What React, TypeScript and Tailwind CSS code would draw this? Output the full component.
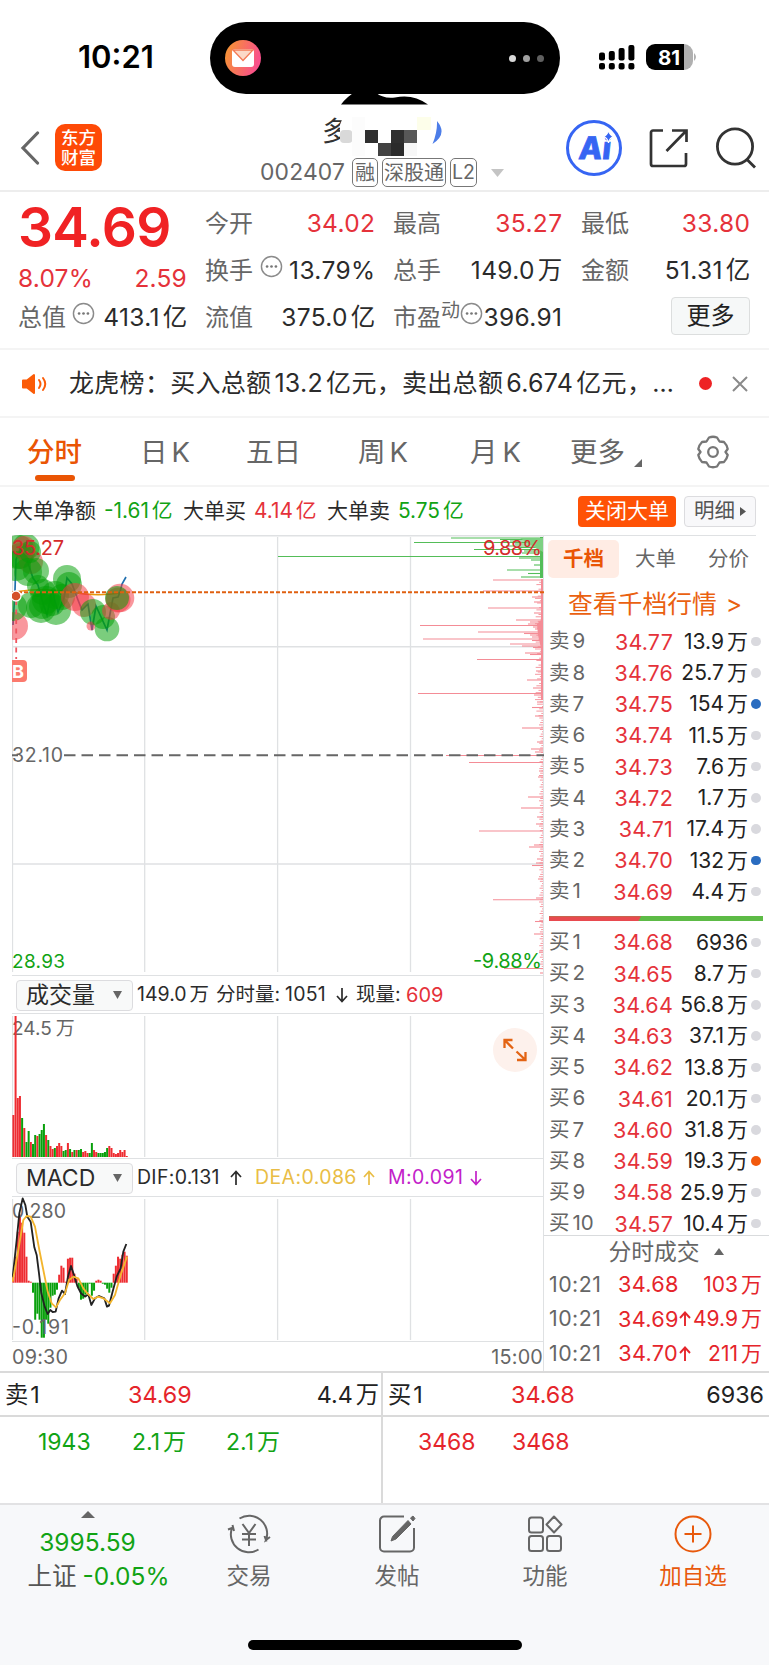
import React from "react";

type Side = "r" | "g";

interface Level {
  label: string;
  no: string;
  price: string;
  vol: string;
  dot?: string;
}

const SELLS: Level[] = [
  { label: "卖", no: "9", price: "34.77", vol: "13.9万" },
  { label: "卖", no: "8", price: "34.76", vol: "25.7万" },
  { label: "卖", no: "7", price: "34.75", vol: "154万", dot: "bg-[#2a6cc0]" },
  { label: "卖", no: "6", price: "34.74", vol: "11.5万" },
  { label: "卖", no: "5", price: "34.73", vol: "7.6万" },
  { label: "卖", no: "4", price: "34.72", vol: "1.7万" },
  { label: "卖", no: "3", price: "34.71", vol: "17.4万" },
  { label: "卖", no: "2", price: "34.70", vol: "132万", dot: "bg-[#2a6cc0]" },
  { label: "卖", no: "1", price: "34.69", vol: "4.4万" },
];

const BUYS: Level[] = [
  { label: "买", no: "1", price: "34.68", vol: "6936" },
  { label: "买", no: "2", price: "34.65", vol: "8.7万" },
  { label: "买", no: "3", price: "34.64", vol: "56.8万" },
  { label: "买", no: "4", price: "34.63", vol: "37.1万" },
  { label: "买", no: "5", price: "34.62", vol: "13.8万" },
  { label: "买", no: "6", price: "34.61", vol: "20.1万" },
  { label: "买", no: "7", price: "34.60", vol: "31.8万" },
  { label: "买", no: "8", price: "34.59", vol: "19.3万", dot: "bg-[#f2590c]" },
  { label: "买", no: "9", price: "34.58", vol: "25.9万" },
  { label: "买", no: "10", price: "34.57", vol: "10.4万" },
];

// [y, left edge] of the long order lines, in page units
const DEPTH_GREEN = [
  [538, 451], [539.5, 500], [541, 510], [542.5, 414], [544, 515], [546, 506], [547.5, 518], [549.5, 474],
  [551, 524], [553, 522], [556.5, 278], [558, 519], [560, 531], [565, 534], [570, 507], [573.5, 528], [577, 521],
];
const DEPTH_RED = [
  [580, 493], [591, 483], [597, 532], [602, 534], [608, 488], [613, 534], [620, 516], [622, 530], [624, 528],
  [625.5, 420], [627, 533], [629, 535], [632, 478], [633.5, 524], [635, 530], [637, 532], [639, 423], [640.5, 532],
  [644, 510], [646, 522], [647.5, 533], [653, 525], [654.5, 530], [659.5, 477], [671, 536], [680, 527], [688, 533],
  [693.5, 418], [695, 534], [702, 537], [707.5, 532], [716, 535], [728, 522], [742, 537], [749, 531], [752, 535],
  [755.5, 446], [762.5, 469], [771, 539], [777, 538], [797, 528], [808, 521], [817, 537], [824, 536], [831, 479],
  [845, 534], [847, 529], [859, 537], [863, 536], [865.5, 532], [879, 538], [898, 536], [899.7, 493],
  [921.5, 535], [934, 534], [951, 539], [968.5, 504], [973, 540],
];

// [cx, cy, r, side]
const BUBBLES: [number, number, number, Side][] = [
  [26, 547, 13.5, "g"], [18, 552, 17, "g"], [20, 556, 13, "g"], [24, 548, 12, "r"], [31, 562, 12, "r"], [16, 566, 15, "g"],
  [28, 572, 14, "g"], [36, 571, 13, "g"], [30, 552, 11, "g"], [67, 579, 14, "g"], [69, 585, 13, "g"],
  [55, 595, 14, "g"], [43, 592, 13, "g"], [31, 605, 13, "g"], [41, 608, 15, "g"], [56, 610, 15, "g"],
  [46, 600, 14, "g"], [62, 597, 13, "g"], [52, 603, 13, "g"], [42, 606, 13, "g"], [38, 586, 11, "g"],
  [75, 597, 14, "r"], [84, 605, 12, "r"],
  [93, 612, 13, "g"], [91, 626, 4.5, "r"], [103, 617, 12, "g"], [107, 629, 12.3, "g"], [111, 611, 9, "r"],
  [120, 598, 14.3, "r"], [118, 600, 12.5, "r"], [117, 598, 12, "g"], [14, 626, 14, "r"], [13, 607, 14, "g"],
];

const VOLUME: [number, Side][] = [
  [42, "r"], [141, "r"], [59, "r"], [61, "r"], [39, "g"], [29, "r"], [15, "g"], [26, "g"], [15, "r"], [13, "g"],
  [22, "g"], [21, "r"], [23, "g"], [27, "g"], [33, "g"], [22, "r"], [17, "g"], [11, "r"], [8, "r"], [9, "g"],
  [11, "r"], [14, "r"], [11, "r"], [6, "g"], [7, "g"], [14, "r"], [8, "g"], [5, "r"], [7, "g"], [7, "r"],
  [7, "g"], [8, "g"], [5, "r"], [6, "r"], [4, "r"], [4, "g"], [14, "g"], [7, "r"], [5, "r"], [4, "g"],
  [4, "g"], [4, "g"], [5, "g"], [9, "g"], [11, "r"], [9, "r"], [4, "r"], [3, "r"], [4, "r"], [7, "r"],
  [5, "r"], [7, "r"], [1, "r"],
];

const MACD = [
  6, 26, 51, 68, 60, 50, 26, 2, 1, -10, -37, -31, -37, -55, -55, -37, -41, -25, -13, -12, -7, 8, 17, 15, 1, 24, 25, 25,
  9, 4, -6, -17, -16, -12, -10, -1, -13, -8, 2, 3, 2, -1, -2, -6, -10, -5, 9, 17, 26, 24, 28, 31, 27,
];

const ask = "#ee2c31";
const up = "#09a00c";
const fillOf = (s: Side) => (s === "r" ? ask : up);

// number with its CJK unit set slightly apart
function Num({ v }: { v: string }) {
  const m = v.match(/^(.*?)([万亿])$/);
  if (!m) return <>{v}</>;
  return (
    <>
      {m[1]}
      <span className="ml-[3px] tracking-normal">{m[2]}</span>
    </>
  );
}

function Info({ className = "" }: { className?: string }) {
  return (
    <svg viewBox="0 0 24 24" className={`w-[23px] h-[23px] shrink-0 ${className}`} fill="none" stroke="#8b8b8b" strokeWidth="1.5">
      <circle cx="12" cy="12" r="10.5" />
      <g fill="#777" stroke="none">
        <circle cx="7.4" cy="12" r="1.4" />
        <circle cx="12" cy="12" r="1.4" />
        <circle cx="16.6" cy="12" r="1.4" />
      </g>
    </svg>
  );
}

function StatusBar() {
  return (
    <div className="relative h-[104px] flex">
      <div className="w-[210px] pl-[78px] pt-[41px] text-[31px] leading-[32px] font-semibold tracking-[0px] text-black">10:21</div>
      <div className="w-[350px] h-[72px] mt-[22px] rounded-full bg-black flex items-center justify-between pl-[15px] pr-[16px]">
        <svg viewBox="0 0 36 36" className="w-9 h-9">
          <defs>
            <linearGradient id="mail" x1="0" y1="0" x2="1" y2="0.3">
              <stop offset="0" stopColor="#f59a2c" />
              <stop offset="1" stopColor="#f9508a" />
            </linearGradient>
          </defs>
          <circle cx="18" cy="18" r="18" fill="url(#mail)" />
          <rect x="7" y="9" width="22" height="18" rx="3" fill="#fff" />
          <path d="M8 10 L18 20.5 L28 10Z" fill="#fbd9c8" stroke="#f47a55" strokeWidth="1.3" />
        </svg>
        <div className="flex gap-[7px]">
          <i className="w-[7px] h-[7px] rounded-full bg-[#d8d8d8]" />
          <i className="w-[7px] h-[7px] rounded-full bg-[#a0a0a0]" />
          <i className="w-[7px] h-[7px] rounded-full bg-[#606060]" />
        </div>
      </div>
      <svg viewBox="600 44 98 27" className="w-[98px] h-[27px] ml-[39px] mt-[44px]">
        {[52.5, 51, 48, 45].map((y, i) => (
          <g key={y}>
            <rect x={600 + i * 9.8} y={y} width="6" height={60.5 - y} rx="2" />
            <rect x={600 + i * 9.8} y="63" width="6" height="6.5" rx="2" />
          </g>
        ))}
        <path d="M684 44h1a9 9 0 0 1 9 9v8a9 9 0 0 1-9 9h-1z" fill="#b0b0b0" />
        <path d="M685 44v26h-29a9 9 0 0 1-9-9v-8a9 9 0 0 1 9-9z" />
        <path d="M695 53q4 4 0 8z" fill="#b0b0b0" />
        <text x="670" y="64.5" textAnchor="middle" fontSize="20.5" fontWeight="700" fill="#fff">81</text>
      </svg>
      <svg viewBox="340 92 90 13" className="absolute left-[340px] top-[92px] w-[90px] h-[13px]">
        <path d="M341 104.5q6-8 14-12.5h20q8 7 20 5.5q18-4 33 7z" />
      </svg>
    </div>
  );
}

function TitleBar() {
  return (
    <div className="h-[88px] flex border-b-2 border-[#ededed] text-[#666]">
      <svg viewBox="0 0 20 34" className="w-5 h-[34px] ml-[20px] mt-[27px]" fill="none" stroke="#666" strokeWidth="3.2" strokeLinecap="round">
        <path d="M17.500 2 L3 17 L17.500 32" />
      </svg>
      <div className="w-[47px] h-[47px] ml-[15px] mt-[20px] rounded-[10px] bg-[#fe4a07] text-white font-medium text-[17.500px] leading-[19.500px] flex flex-col items-center justify-center">
        <span>东方</span>
        <span>财富</span>
      </div>
      <div className="w-[306px] ml-[158px]">
        <div className="flex h-[53px] pt-[13px] pl-[62px]">
          <span className="w-[18px] h-[28px] whitespace-nowrap text-[27px] leading-[28px] mt-[1px] text-[#333]">多</span>
          <svg viewBox="340 117 106 40" className="relative w-[106px] h-[40px]">
            <path d="M343 117H431V156H340V143L338 130Z" fill="#fff" />
            <rect x="340" y="130" width="12.500" height="13" rx="4" fill="#d9d9d9" />
            <rect x="352" y="117" width="13" height="39" fill="#fcfcfc" />
            <rect x="365" y="130" width="13" height="13" fill="#2f2f2f" />
            <rect x="391" y="130" width="13" height="13" fill="#2f2f2f" />
            <rect x="404" y="130" width="13" height="13" fill="#585858" />
            <rect x="378" y="143" width="13" height="13" fill="#424242" />
            <rect x="391" y="143" width="13" height="13" fill="#2b2b2b" />
            <rect x="404" y="143" width="13" height="13" fill="#f7f7f7" />
            <rect x="417" y="117" width="14" height="13" fill="#fdfeea" />
            <path d="M437 121q11 13-4.500 23q5-12 4.500-23z" fill="#4c7de8" />
          </svg>
        </div>
        <div className="flex items-center h-[31px] whitespace-nowrap">
          <span className="text-[22.800px] w-[92px] tracking-[0.200px]">002407</span>
          <span className="w-[26px] h-[29px] border-[1.500px] border-[#777] rounded-[5px] text-[20px] flex items-center justify-center">融</span>
          <span className="w-[64px] h-[29px] ml-[4px] border-[1.500px] border-[#777] rounded-[5px] text-[20px] flex items-center justify-center">深股通</span>
          <span className="w-[27px] h-[29px] ml-[4px] border-[1.500px] border-[#777] rounded-[5px] text-[19.500px] flex items-center justify-center">L2</span>
          <svg viewBox="0 0 13 8" className="w-[13px] h-2 ml-[14px]"><path d="M0 0h13L6.500 8z" fill="#c4c4c4" /></svg>
        </div>
      </div>
      <svg viewBox="566 120 58 58" className="w-[58px] h-[58px] mt-[15px]" fill="none">
        <circle cx="594" cy="149" r="26.500" stroke="#3665f3" strokeWidth="3" />
        <g transform="translate(578 160) skewX(-6)">
          <text x="0" y="0" fontSize="31" fontWeight="800" fill="#3665f3" stroke="#3665f3" strokeWidth="0.800" textLength="32" lengthAdjust="spacingAndGlyphs">Ai</text>
        </g>
        <path d="M608.500 131q1 5.500 5.500 6.500q-4.500 1-5.500 6.500q-1-5.500-5.500-6.500q4.500-1 5.500-6.500z" fill="#3665f3" stroke="#fff" strokeWidth="1.200" />
      </svg>
      <svg viewBox="0 0 42 42" className="w-[42px] h-[42px] ml-[24px] mt-[23px]" fill="none" stroke="#333" strokeWidth="2.700">
        <path d="M15 3.500H5a2 2 0 0 0-2 2V37a2 2 0 0 0 2 2H36a2 2 0 0 0 2-2V26" />
        <path d="M24 3.500H38.500V15M38 4L18.500 24" />
      </svg>
      <svg viewBox="0 0 42 42" className="w-[42px] h-[42px] ml-[25px] mt-[23px]" fill="none" stroke="#333" strokeWidth="2.800">
        <circle cx="20" cy="19.500" r="17.600" />
        <path d="M31.500 32L40 40.500" />
      </svg>
    </div>
  );
}

function Cell({ label, value, red, children }: { label: string; value: string; red?: boolean; children?: React.ReactNode }) {
  return (
    <div className="flex items-center h-[47px] whitespace-nowrap text-[24px]">
      <span className="text-[#666]">{label}</span>
      {children}
      <span className={`ml-auto text-[24.500px] tracking-[0.350px] -mr-[0.350px] ${red ? "text-[#e5323a]" : "text-[#2b2b2b]"}`}><Num v={value} /></span>
    </div>
  );
}

function Quote() {
  return (
    <div className="h-[158px] pl-[18px] pr-[19px] pt-[8px] flex border-b-2 border-[#f4f4f4] leading-none">
      <div className="w-[169px]">
        <div className="h-[54px] flex items-center text-[55px] font-semibold tracking-[-0.700px] text-[#f02224]">34.69</div>
        <div className="h-[40px] flex items-center justify-between pt-[8px] text-[24.500px] tracking-[0.200px] text-[#e5323a]">
          <span>8.07%</span>
          <span>2.59</span>
        </div>
        <Cell label="总值" value="413.1亿"><Info className="ml-[6px] -mt-[9px]" /></Cell>
      </div>
      <div className="w-[170px] ml-[18px]">
        <Cell label="今开" value="34.02" red />
        <Cell label="换手" value="13.79%"><Info className="ml-[7px] -mt-[9px]" /></Cell>
        <Cell label="流值" value="375.0亿" />
      </div>
      <div className="w-[169px] ml-[18px]">
        <Cell label="最高" value="35.27" red />
        <Cell label="总手" value="149.0万" />
        <Cell label="市盈" value="396.91">
          <span className="text-[19px] text-[#666] -mt-[15px]">动</span>
          <Info className="-mt-[9px]" />
        </Cell>
      </div>
      <div className="w-[169px] ml-[19px]">
        <Cell label="最低" value="33.80" red />
        <Cell label="金额" value="51.31亿" />
        <div className="w-[79px] h-[38px] ml-auto mt-[3px] rounded-[4px] border-[1.500px] border-[#dcdede] bg-[#f6f8f8] text-[24px] text-[#222] flex items-center justify-center">更多</div>
      </div>
    </div>
  );
}

function News() {
  return (
    <div className="h-[68px] flex items-center border-b-2 border-[#f4f4f4] pl-[21px] pt-[1px] whitespace-nowrap text-[#2b2b2b]">
      <svg viewBox="0 0 28 22" className="w-7 h-[22px]" fill="none" stroke="#fb5c08" strokeWidth="2" strokeLinecap="round">
        <path d="M2 7.500h4l7-5.500v18L6 14.500H2z" fill="#fb5c08" strokeLinejoin="round" />
        <path d="M18 7q3 4 0 8" />
        <path d="M22 5q4.500 6 0 12" />
      </svg>
      <span className="ml-[20px] w-[608px] text-[25px] tracking-[0.300px]">
        龙虎榜：买入总额<span className="mx-[3px]">13.2</span>亿元，卖出总额<span className="mx-[3px]">6.674</span>亿元，…
      </span>
      <i className="w-[13px] h-[13px] rounded-full bg-[#ee2224] ml-[22px]" />
      <svg viewBox="0 0 16 16" className="w-4 h-4 ml-[20px]" stroke="#8a8a8a" strokeWidth="2"><path d="M1 1l14 14M15 1L1 15" /></svg>
    </div>
  );
}

function PeriodTabs() {
  return (
    <div className="h-[69px] flex border-b-2 border-[#f4f4f4] pl-[27px] text-[27.500px] leading-[69px] text-[#666] whitespace-nowrap">
      <div className="w-[113px] relative text-[#ea5504] font-medium">
        分时
        <i className="absolute left-[8px] bottom-[4px] w-[40px] h-[6px] rounded-full bg-[#ea5504]" />
      </div>
      <div className="w-[106px]">日<span className="ml-[4px]">K</span></div>
      <div className="w-[112px]">五日</div>
      <div className="w-[112px]">周<span className="ml-[4px]">K</span></div>
      <div className="w-[100px]">月<span className="ml-[5px]">K</span></div>
      <div className="w-[126px] flex">
        更多
        <svg viewBox="0 0 8 8" className="w-2 h-2 ml-[9px] mt-[41px]"><path d="M8 0v8H0z" fill="#666" /></svg>
      </div>
      <svg viewBox="-17 -17 34 34" className="w-[34px] h-[34px] mt-[17px]" fill="none" stroke="#777" strokeWidth="2.300" strokeLinejoin="round">
        <path d="M-4-14.500Q0-16 4-14.500L6.500-10.500L11-10Q14-7 14.700-3L12.500 0L14.700 3Q14 7 11 10L6.500 10.500L4 14.500Q0 16-4 14.500L-6.500 10.500L-11 10Q-14 7-14.700 3L-12.500 0L-14.700-3Q-14-7-11-10L-6.500-10.500Z" />
        <circle r="4.800" />
      </svg>
    </div>
  );
}

function BigOrders() {
  return (
    <div className="h-[48px] flex items-center pl-[12px] pr-[13px] text-[21px] text-[#2b2b2b] whitespace-nowrap">
      <span className="w-[92px]">大单净额</span>
      <span className="w-[79px] text-[#11a314] text-[20.800px]"><Num v="-1.61亿" /></span>
      <span className="w-[71px]">大单买</span>
      <span className="w-[73px] text-[#e5323a] text-[20.800px]"><Num v="4.14亿" /></span>
      <span className="w-[71px]">大单卖</span>
      <span className="text-[#11a314] text-[20.800px]"><Num v="5.75亿" /></span>
      <span className="ml-auto w-[98px] h-[31px] rounded-[4px] bg-[#ff5206] text-white flex items-center justify-center">关闭大单</span>
      <span className="ml-[8px] w-[72px] h-[31px] rounded-[4px] border-[1.500px] border-[#dcdcdf] bg-[#f8f8fa] text-[20.500px] text-[#555] flex items-center justify-center">
        明细
        <svg viewBox="0 0 6 9" className="w-[6px] h-[9px] ml-[5px]"><path d="M0 0l6 4.500L0 9z" fill="#555" /></svg>
      </span>
    </div>
  );
}

function Grid({ top, bottom }: { top: number; bottom: number }) {
  return (
    <g stroke="#dfe1e3" strokeWidth="1.300">
      <path d={`M12.500 ${top}V${bottom}M144.700 ${top}V${bottom}M277.600 ${top}V${bottom}M410.500 ${top}V${bottom}`} />
    </g>
  );
}

function PriceChart() {
  return (
    <svg viewBox="12 535 532 440" className="block w-[532px] h-[440px]">
      <Grid top={537} bottom={972} />
      <path d="M12 535.700H544M12 646.700H544M12 864H544" stroke="#dfe1e3" strokeWidth="1.400" />
      <g fontSize="19">
        <text x="12" y="762" fill="#666" fontSize="19.500" textLength="51">32.10</text>
        <text x="12" y="968" fill="#11a314" textLength="53">28.93</text>
      </g>
      <g stroke="#53bd58" strokeWidth="1.100">
        {DEPTH_GREEN.map(([y, x]) => <path key={y} d={`M${x} ${y}H543`} />)}
        <path d="M541.500 537V578" strokeWidth="3" />
        <path d="M520 538L543 538V552L534 547Z" fill="#7ed183" stroke="none" />
      </g>
      <g stroke="#f48c96" strokeWidth="1.100">
        {DEPTH_RED.map(([y, x]) => <path key={y} d={`M${x} ${y}H543`} />)}
        {Array.from({ length: 170 }, (_, i) => (
          <path key={i} strokeWidth="0.900" d={`M${542 - ((i * 37) % 11) * (i < 60 ? 0.7 : 0.3)} ${580 + i * 2.3}H543`} />
        ))}
        <path d="M542 579V700" strokeWidth="2" />
        <path d="M543 618L537 624L538 635L541 648H543Z" fill="#f48c96" stroke="none" />
      </g>
      <path d="M12 755.300H18M64 755.300H544" stroke="#666" strokeWidth="2" strokeDasharray="11.500 6" />
      <path d="M14 592q30-5 56 0t50 1" stroke="#e8960c" strokeWidth="1.500" fill="none" />
      <path d="M13 625L15 590L16 560L20 548L27 560L33 578L38 585L42 600L47 615L52 590L58 612L64 598L67 578L72 584L78 600L82 610L88 604L92 630L96 606L107 630L113 598L118 597L120 592L122 584L126 577" stroke="#1f6fae" strokeWidth="1.700" fill="none" />
      {BUBBLES.map(([x, y, r, s], i) => (
        <circle key={i} cx={x} cy={y} r={r} fill={s === "r" ? "#f33743" : "#02a006"} fillOpacity="0.52" />
      ))}
      <path d="M12 592.300H544" stroke="#e06010" strokeWidth="2" strokeDasharray="4 2" />
      <path d="M16.200 600V659" stroke="#f05560" strokeWidth="1.800" strokeDasharray="5 4.500" />
      <circle cx="16" cy="596" r="5" fill="#d4502a" stroke="#fff" strokeWidth="1.300" />
      <path d="M8 660H23a4 4 0 0 1 4 4V678a4 4 0 0 1-4 4H8z" fill="#fb7a6e" />
      <text x="12" y="677.500" fontSize="18" fontWeight="700" fill="#fff" textLength="12" lengthAdjust="spacingAndGlyphs">B</text>
      <g fontSize="20">
        <text x="12" y="555" fill="#d52b2b" textLength="52">35.27</text>
        <text x="542" y="555" textAnchor="end" fill="#d52b2b" textLength="59">9.88%</text>
        <text x="542" y="968" textAnchor="end" fill="#11a314" textLength="69">-9.88%</text>
      </g>
    </svg>
  );
}

function Picker({ name }: { name: string }) {
  return (
    <span className="w-[117px] h-[31px] mr-[4px] ml-[4px] rounded-[4px] border-[1.500px] border-[#dcdcdf] bg-[#f8f9f9] text-[23px] flex items-center justify-between pl-[9px] pr-[10px]">
      {name}
      <svg viewBox="0 0 9 8" className="w-[9px] h-2"><path d="M0 0h9L4.500 8z" fill="#666" /></svg>
    </span>
  );
}

function VolumeChart() {
  return (
    <svg viewBox="12 1014 532 144" className="block w-[532px] h-[144px]">
      <Grid top={1016} bottom={1157} />
      <text x="12" y="1035" fontSize="19" fill="#666">24.5<tspan dx="4">万</tspan></text>
      {VOLUME.map(([h, s], i) => (
        <rect key={i} x={12.4 + i * 2.18} y={1157 - h} width="2" height={h} fill={fillOf(s)} />
      ))}
      <circle cx="515" cy="1050" r="22" fill="#fdf1ec" />
      <path d="M504.500 1048V1040H512.500M505 1040.500L513 1048.500M525.500 1052V1060H517M525 1059.500L516.500 1051.500" fill="none" stroke="#e36414" strokeWidth="2.300" />
    </svg>
  );
}

function MacdChart() {
  return (
    <svg viewBox="12 1197 532 144" className="block w-[532px] h-[144px]">
      <Grid top={1199} bottom={1340} />
      {MACD.map((v, i) => (
        <rect key={i} x={12.4 + i * 2.18} y={v > 0 ? 1282.7 - v : 1282.7} width="2" height={Math.abs(v)} fill={v > 0 ? ask : up} />
      ))}
      <g fontSize="19.500" fill="#666">
        <text x="12" y="1218" textLength="54">0.280</text>
        <text x="12" y="1333.500" textLength="57">-0.191</text>
      </g>
      <g transform="translate(0 1160) scale(.3333)" fill="none" strokeLinejoin="round">
        <path d="M38 352L50 240L58 160L68 115L76 135L82 170L92 185L103 262L110 285L117 340L124 400L134 440L143 462L151 450L158 456L167 455L176 415L186 392L195 402L204 350L213 318L222 345L232 378L243 400L255 410L265 403L274 435L285 415L297 408L313 415L321 440L327 437L337 398L350 350L362 325L370 275L379 252" stroke="#222" strokeWidth="5.500" />
        <path d="M38 365L55 270L70 180L80 168L92 170L105 200L118 270L130 330L143 395L155 430L168 442L180 420L195 400L207 360L220 350L235 355L250 385L262 400L280 417L295 410L310 415L330 430L345 405L362 345L381 290" stroke="#f3b52d" strokeWidth="5.500" />
      </g>
    </svg>
  );
}

function Book({ rows }: { rows: Level[] }) {
  return (
    <>
      {rows.map((l) => (
        <div key={l.label + l.no} className="h-[31.250px] shrink-0 flex items-center text-[21.500px] whitespace-nowrap">
          <span className="w-[48px] text-[#666] text-[20.500px]">
            <span className="mr-[3px]">{l.label}</span>{l.no}
          </span>
          <span className="w-[76px] text-right text-[#e5323a] tracking-[0.200px]">{l.price}</span>
          <span className="w-[75px] text-right text-[#222] text-[21px]"><Num v={l.vol} /></span>
          <i className={`w-[9.500px] h-[9.500px] rounded-full ml-[3px] ${l.dot ?? "bg-[#d9d9de]"}`} />
        </div>
      ))}
    </>
  );
}

function OrderBook() {
  return (
    <div className="w-[225px] h-[836px] flex flex-col">
      <div className="h-[48px] border-t border-[#dfe1e3] mr-[13px] pl-[4px] flex items-center text-[20.500px] text-[#666]">
        <span className="w-[71px] h-[38px] -mt-[1px] rounded-[5px] bg-[#ffece4] text-[#ea5504] font-bold flex items-center justify-center">千档</span>
        <span className="ml-[16px]">大单</span>
        <span className="ml-auto mr-[7px]">分价</span>
      </div>
      <div className="h-[43px] pl-[24px] flex items-center pt-[1px] text-[24.800px] text-[#ea6110] whitespace-nowrap">
        查看千档行情<span className="ml-[9px]">&gt;</span>
      </div>
      <div className="pl-[5px]"><Book rows={SELLS} /></div>
      <div className="h-[19.500px] pt-[9px] shrink-0">
        <div className="ml-[5px] w-[214px] h-[5px] flex bg-[#5dbb46]"><i className="w-[92px] h-[5px] bg-[#e84a4f] [clip-path:polygon(0_0,100%_0,97%_100%,0_100%)]" /></div>
      </div>
      <div className="pl-[5px] -mb-[4px]"><Book rows={BUYS} /></div>
      <div className="border-t-[1.500px] border-[#d9dbdd] h-[32px] shrink-0 flex items-center justify-center pl-[19px] text-[22.800px] text-[#666]">
        分时成交
        <svg viewBox="0 0 10 7" className="w-[10px] h-[7px] ml-[14px]"><path d="M0 7h10L5 0z" fill="#666" /></svg>
      </div>
      {[
        ["34.68", "", "103万"],
        ["34.69", "↑", "49.9万"],
        ["34.70", "↑", "211万"],
      ].map(([p, a, v]) => (
        <div key={p} className="h-[34.500px] shrink-0 flex items-center pl-[5px] pr-[7px] text-[21.700px] text-[#e5252b] whitespace-nowrap">
          <span className="w-[69px] text-[21.300px] tracking-[0.500px] text-[#666]">10:21</span>
          <span className="w-[60px] text-right tracking-[0.300px]">{p}</span>
          <span className="w-[13px] flex justify-center">
            {a && (
              <svg viewBox="0 0 14 16" className="w-[14px] h-4 shrink-0" fill="none" stroke="currentColor" strokeWidth="1.900"><path d="M7 15V2M2 7L7 1.500L12 7" /></svg>
            )}
          </span>
          <span className="flex-1 text-right text-[21px]"><Num v={v} /></span>
        </div>
      ))}
    </div>
  );
}

function Arrow({ down }: { down?: boolean }) {
  return (
    <svg viewBox="0 0 14 16" className="w-[14px] h-4 shrink-0" fill="none" stroke="currentColor" strokeWidth="1.700">
      <path d={down ? "M7 1V14M2 9L7 14.500L12 9" : "M7 15V2M2 7L7 1.500L12 7"} />
    </svg>
  );
}

function Market() {
  return (
    <div className="flex h-[836px]">
      <div className="w-[544px] pl-[12px] border-r-[1.500px] border-[#dfe1e3]">
        <PriceChart />
        <div className="h-[39px] border-y-[1.500px] border-[#dfe1e3] flex items-center pt-[1px] text-[19.500px] text-[#2b2b2b] whitespace-nowrap">
          <Picker name="成交量" />
          <span className="w-[79px]"><Num v="149.0万" /></span>
          <span className="w-[69px]">分时量:</span>
          <span className="w-[50px] tracking-[0.200px]">1051</span>
          <Arrow down />
          <span className="ml-[7px] w-[50px]">现量:</span>
          <span className="text-[#e5323a] text-[20px]">609</span>
        </div>
        <VolumeChart />
        <div className="h-[39px] border-y-[1.500px] border-[#dfe1e3] flex items-center pt-[1px] text-[19.500px] text-[#2b2b2b] whitespace-nowrap">
          <Picker name="MACD" />
          <span className="w-[92px] tracking-[0.300px]">DIF:0.131</span>
          <Arrow />
          <span className="ml-[12px] w-[107px] flex items-center text-[#e9bd45] tracking-[0.400px]">DEA:0.086</span>
          <span className="text-[#e9bd45]"><Arrow /></span>
          <span className="ml-[12px] w-[81px] text-[#c321c9] tracking-[0.400px]">M:0.091</span>
          <span className="text-[#c321c9]"><Arrow down /></span>
        </div>
        <MacdChart />
        <div className="h-[30px] border-t-[1.500px] border-[#dfe1e3] flex items-center justify-between pt-[2px] text-[19.800px] tracking-[0.200px] text-[#666]">
          <span>09:30</span>
          <span>15:00</span>
        </div>
      </div>
      <OrderBook />
    </div>
  );
}

function Level1({ label, price, vol, queue, side }: { label: string; price: string; vol: string; queue: string[]; side: Side }) {
  return (
    <div className={`whitespace-nowrap ${side === "g" ? "w-[383px] border-r-2 border-[#dadada]" : "flex-1"}`}>
      <div className={`h-[44px] flex items-center border-b-2 border-[#dadada] pl-[5px] pt-[2px] text-[23.300px] text-[#222] ${side === "g" ? "pr-[2px]" : "pr-[5px]"}`}>
        <span className="w-[123px]">{label}<span className="ml-[2px]">1</span></span>
        <span className="text-[#e5252b]">{price}</span>
        <span className="ml-auto"><Num v={vol} /></span>
      </div>
      <div className={`flex pt-[9px] leading-[32px] text-[23px] ${side === "g" ? "pl-[38px] text-[#11a314]" : "pl-[35px] text-[#e5252b]"}`}>
        {queue.map((q, i) => (
          <span key={i} className="w-[94px]"><Num v={q} /></span>
        ))}
      </div>
    </div>
  );
}

function NavItem({ label, active, children }: { label: string; active?: boolean; children: React.ReactNode }) {
  return (
    <div className={`w-[148px] flex flex-col items-center pt-[7px] ${active ? "text-[#e8590c]" : "text-[#666]"}`}>
      <svg viewBox="0 0 44 44" className="w-[44px] h-[44px]" fill="none" stroke="currentColor" strokeWidth="2">{children}</svg>
      <span className="text-[22.500px] leading-[32px] mt-[4px]">{label}</span>
    </div>
  );
}

function BottomNav() {
  return (
    <div className="h-[162px] relative bg-[#f7f8fa] border-t-2 border-[#e2e2e4] flex whitespace-nowrap">
      <div className="w-[175px] flex flex-col items-center pt-[6px] text-[24.500px] text-[#11a314]">
        <svg viewBox="0 0 14 7" className="w-[14px] h-[7px]"><path d="M0 7h14L7 0z" fill="#666" /></svg>
        <span className="leading-[32px] mt-[8px]">3995.59</span>
        <span className="leading-[32px] mt-[2px] ml-[22px]"><span className="text-[#555] mr-[6px]">上证</span>-0.05%</span>
      </div>
      <NavItem label="交易">
        <path d="M12.500 6.500A18 18 0 0 1 39 28L43 25M39.500 29.500L37.500 24M31.500 37.500A18 18 0 0 1 5 16L1 17.500M5.500 13L7 19" />
        <path d="M15.500 12L22 21L28.500 12M22 21V34M15 22H29M15 27.500H29" />
      </NavItem>
      <NavItem label="发帖">
        <path d="M29 4.500H9A4 4 0 0 0 5 8.500V35.500A4 4 0 0 0 9 39.500H35A4 4 0 0 0 39 35.500V16" />
        <path d="M33 8.500L36 12L21 27L16 29L17.500 24.500ZM35.500 6L38 4L40 6.500L38 9Z" fill="currentColor" strokeWidth="1" />
      </NavItem>
      <NavItem label="功能">
        <rect x="6" y="5.500" width="14" height="15" rx="2.500" />
        <rect x="6" y="24" width="14" height="15" rx="2.500" />
        <rect x="24" y="24" width="14" height="15" rx="2.500" />
        <path d="M31 4.500L38.500 12.500L31 20.500L23.500 12.500Z" strokeLinejoin="round" />
      </NavItem>
      <NavItem label="加自选" active>
        <circle cx="22" cy="22" r="17.500" />
        <path d="M22 13.500V30.500M13.500 22H30.500" />
      </NavItem>
      <div className="absolute left-[248px] bottom-[15px] w-[274px] h-[10px] rounded-full bg-black" />
    </div>
  );
}

export default function App() {
  return (
    <div className="w-[769px] h-[1665px] overflow-hidden bg-white font-['Inter','Noto_Sans_CJK_SC',sans-serif]">
      <StatusBar />
      <TitleBar />
      <Quote />
      <News />
      <PeriodTabs />
      <BigOrders />
      <Market />
      <div className="flex h-[132px] border-t-2 border-[#dadada]">
        <Level1 label="卖" price="34.69" vol="4.4万" queue={["1943", "2.1万", "2.1万"]} side="g" />
        <Level1 label="买" price="34.68" vol="6936" queue={["3468", "3468"]} side="r" />
      </div>
      <BottomNav />
    </div>
  );
}
